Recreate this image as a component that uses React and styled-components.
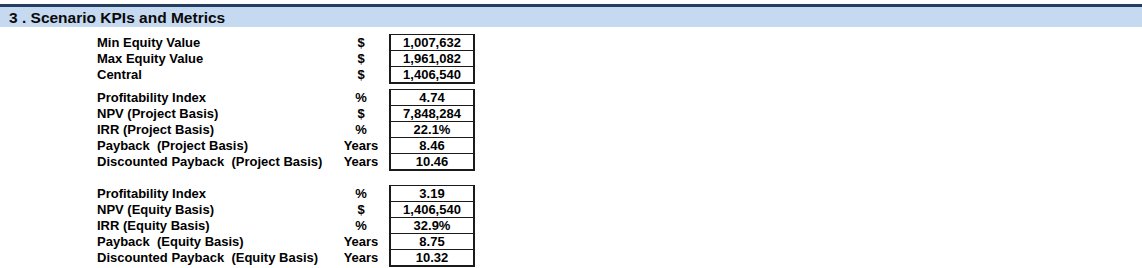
import React from "react";
import styled, { createGlobalStyle } from "styled-components";

const Global = createGlobalStyle`
  html, body { margin: 0; padding: 0; background: #ffffff; }
  body { font-family: "Liberation Sans", Arial, sans-serif; color: #000; }
`;

const Page = styled.div`
  padding-top: 4px;
  width: 1142px;
`;

const Header = styled.div`
  border-top: 3px solid #243f60;
  background: #c5d9f1;
  height: 20px;
  padding-left: 9px;
  font-size: 15.5px;
  font-weight: bold;
  line-height: 21px;
  color: #0a0a0a;
`;

const Groups = styled.div`
  padding-left: 97px;
  padding-top: 7px;
`;

const Group = styled.div`
  display: grid;
  grid-template-columns: 236px 56px 86px;
  margin-top: ${(p) => p.$gap}px;
`;

const Label = styled.div`
  font-size: 13px;
  font-weight: bold;
  height: 16px;
  line-height: 17px;
  white-space: pre;
`;

const Unit = styled(Label)`
  text-align: center;
`;

const Value = styled.div`
  box-sizing: border-box;
  font-size: 13px;
  font-weight: bold;
  text-align: center;
  height: ${(p) => (p.$last ? 18 : 16)}px;
  line-height: 16px;
  border-left: 2px solid #1a1a1a;
  border-right: 2px solid #1a1a1a;
  border-top: 1px solid #1a1a1a;
  border-bottom: ${(p) => (p.$last ? "2px solid #1a1a1a" : "none")};
`;

const groups = [
  {
    gap: 0,
    rows: [
      ["Min Equity Value", "$", "1,007,632"],
      ["Max Equity Value", "$", "1,961,082"],
      ["Central", "$", "1,406,540"],
    ],
  },
  {
    gap: 5,
    rows: [
      ["Profitability Index", "%", "4.74"],
      ["NPV (Project Basis)", "$", "7,848,284"],
      ["IRR (Project Basis)", "%", "22.1%"],
      ["Payback  (Project Basis)", "Years", "8.46"],
      ["Discounted Payback  (Project Basis)", "Years", "10.46"],
    ],
  },
  {
    gap: 14,
    rows: [
      ["Profitability Index", "%", "3.19"],
      ["NPV (Equity Basis)", "$", "1,406,540"],
      ["IRR (Equity Basis)", "%", "32.9%"],
      ["Payback  (Equity Basis)", "Years", "8.75"],
      ["Discounted Payback  (Equity Basis)", "Years", "10.32"],
    ],
  },
];

export default function App() {
  return (
    <Page>
      <Global />
      <Header>3 . Scenario KPIs and Metrics</Header>
      <Groups>
        {groups.map((g, gi) => (
          <Group key={gi} $gap={g.gap}>
            {g.rows.map(([l, u, v], ri) => (
              <React.Fragment key={ri}>
                <Label>{l}</Label>
                <Unit>{u}</Unit>
                <Value $last={ri === g.rows.length - 1}>{v}</Value>
              </React.Fragment>
            ))}
          </Group>
        ))}
      </Groups>
    </Page>
  );
}
